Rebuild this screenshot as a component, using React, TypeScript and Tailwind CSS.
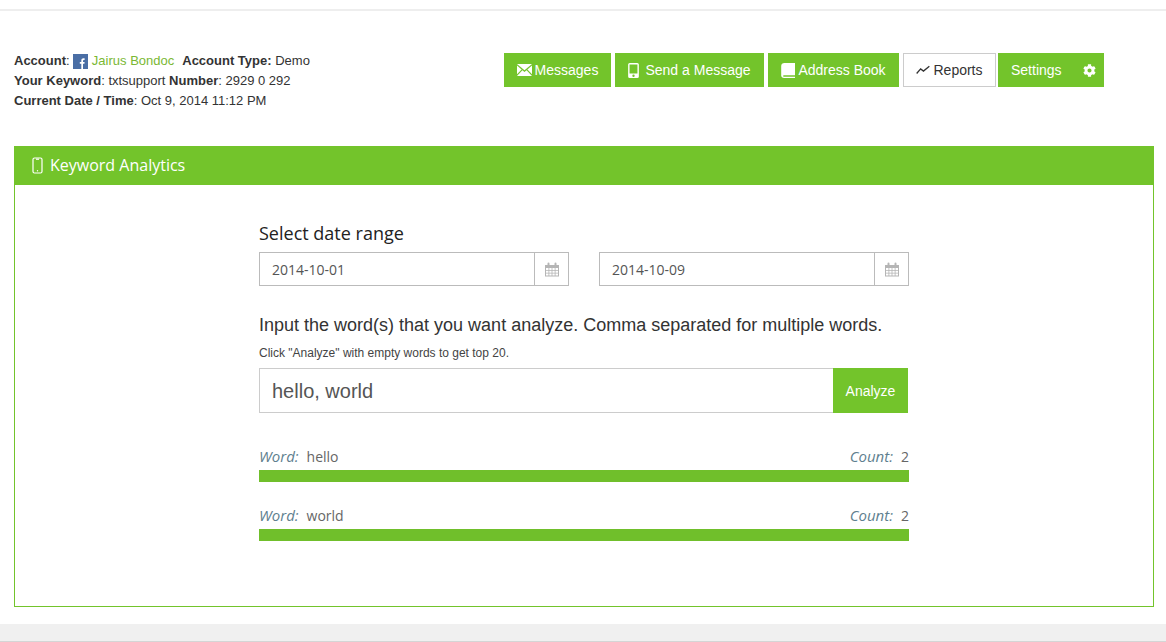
import React from 'react';
import { FaCog } from 'react-icons/fa';

const arial = "font-['Liberation_Sans',Arial,sans-serif]";
const open = "font-['Open_Sans',sans-serif]";

const MailIcon = () => (
  <svg width="15" height="12" viewBox="0 0 15 12" fill="currentColor">
    <path d="M0 0h15L7.500 6.200z" />
    <path d="M0 1.600v8.600L4.600 5.400z" />
    <path d="M15 1.600v8.600L10.400 5.400z" />
    <path d="M5.400 6.200l2.100 1.700 2.100-1.700L15 12H0z" />
  </svg>
);

const PhoneIcon = () => (
  <svg width="11" height="15" viewBox="0 0 10 14" fill="currentColor">
    <path fillRule="evenodd" d="M1.500 0h7A1.500 1.500 0 0 1 10 1.500v11A1.500 1.500 0 0 1 8.500 14h-7A1.500 1.500 0 0 1 0 12.500v-11A1.500 1.500 0 0 1 1.500 0zM1.300 1.500v8.400h7.400V1.500zM5 10.800a1.100 1.100 0 1 0 0 2.200 1.100 1.100 0 0 0 0-2.200z" />
  </svg>
);

const PhoneOutlineIcon = () => (
  <svg width="11" height="17" viewBox="0 0 11 17" fill="none" stroke="currentColor" strokeWidth="1.200">
    <rect x="1" y="1" width="9" height="15" rx="1.500" />
    <path d="M4 2.200h3" />
    <circle cx="5.500" cy="13.800" r=".7" fill="currentColor" stroke="none" />
  </svg>
);

const BookIcon = () => (
  <svg width="14" height="15" viewBox="0 0 14 15" fill="currentColor">
    <path d="M3.400 0H14v12.200H3.500c-.9 0-1.500.3-1.500.8s.6.800 1.500.800H14V15H3.200C1.400 15 .2 14 .2 12.800V3C.2 1.200 1.400 0 3.400 0z" />
  </svg>
);

const TrendIcon = () => (
  <svg width="14" height="10" viewBox="0 0 15 10" fill="none" stroke="currentColor" strokeWidth="1.400">
    <path d="M.7 8.700 5 3.800l3 2.400L14.300 1" />
  </svg>
);

const CalendarIcon = () => (
  <svg width="14" height="15" viewBox="0 0 14 14" fill="#b5b5b5">
    <path fillRule="evenodd" d="M0 2.500h2.500V1a1 1 0 0 1 2 0v1.500h5V1a1 1 0 0 1 2 0v1.500H14V14H0zM1 5.500v2h2.500v-2zm3.300 0v2h2.300v-2zm3.100 0v2h2.300v-2zm3.100 0v2H13v-2zM1 8.300v2h2.500v-2zm3.300 0v2h2.300v-2zm3.100 0v2h2.300v-2zm3.100 0v2H13v-2zM1 11.100V13h2.500v-1.900zm3.300 0V13h2.300v-1.900zm3.100 0V13h2.300v-1.900zm3.100 0V13H13v-1.900z" />
  </svg>
);

const FacebookIcon = () => (
  <svg width="15" height="15" viewBox="0 0 15 15" className="inline-block align-[-4px]">
    <rect width="15" height="15" fill="#4a6ea5" />
    <path fill="#fff" d="M8.300 15V9.800H6.800V7.900h1.500V6.600c0-1.500.9-2.300 2.200-2.300h1.100v1.800h-.8c-.6 0-.8.300-.8.800v1h1.600l-.2 1.900h-1.400V15z" />
  </svg>
);

const NavButton = ({ width, icon, label, active }: { width: string; icon: React.ReactNode; label: string; active?: boolean }) => (
  <div
    className={`${width} h-[34px] flex items-center justify-center gap-[3px] text-sm ${
      active ? 'bg-white border border-[#ccc] text-[#333]' : 'bg-[#73c42b] text-white'
    }`}
  >
    {icon}
    <span>{label}</span>
  </div>
);

const DateInput = ({ value }: { value: string }) => (
  <div className="w-[310px] h-[34px] flex border border-[#bbb]">
    <div className={`flex-1 pl-3 pt-[1px] flex items-center text-sm text-[#555] ${open}`}>{value}</div>
    <div className="w-[34px] border-l border-[#bbb] flex items-center justify-center">
      <CalendarIcon />
    </div>
  </div>
);

const WordBar = ({ word, count }: { word: string; count: number }) => (
  <div className={`h-[59px] ${open} text-[15px] text-[#666]`}>
    <div className="flex justify-between h-[26px] items-center pb-[1px]">
      <span>
        <i className="text-[#5f7f8f] mr-2">Word:</i>
        <span className="text-[14px]">{word}</span>
      </span>
      <span>
        <i className="text-[#5f7f8f] mr-2">Count:</i>
        <span className="text-[14px]">{count}</span>
      </span>
    </div>
    <div className="h-3 bg-[#70bf2b]" />
  </div>
);

export default function App() {
  return (
    <div className={`w-[1166px] h-[642px] bg-white overflow-hidden flex flex-col ${arial}`}>
      <div className="h-[11px] border-b-2 border-[#eee]" />

      {/* account info + nav */}
      <div className="h-[135px] pl-[14px] pt-[39px] flex">
        <div className="w-[490px] pt-[0.5px] text-[13px] leading-5 text-[#333]">
          <div>
            <b>Account</b>: <FacebookIcon /> <span className="text-[#7ab833]">Jairus Bondoc</span>
            <b className="ml-2">Account Type:</b> Demo
          </div>
          <div>
            <b>Your Keyword</b>: txtsupport <b>Number</b>: 2929 0 292
          </div>
          <div>
            <b>Current Date / Time</b>: Oct 9, 2014 11:12 PM
          </div>
        </div>
        <div className="flex flex-col pt-[3px]">
          <div className="flex">
            <NavButton width="w-[107px]" icon={<MailIcon />} label="Messages" />
            <div className="w-1" />
            <NavButton width="w-[149px]" icon={<span className="mr-[3px] flex"><PhoneIcon /></span>} label="Send a Message" />
            <div className="w-1" />
            <NavButton width="w-[131px]" icon={<BookIcon />} label="Address Book" />
            <div className="w-1" />
            <NavButton width="w-[93px]" icon={<TrendIcon />} label="Reports" active />
            <div className="w-0.5" />
            <div className="w-[106px] h-[34px] bg-[#73c42b] text-white text-sm flex items-center justify-between pl-[13px] pr-[8px]">
              <span>Settings</span>
              <FaCog className="text-[13px]" />
            </div>
          </div>
        </div>
      </div>

      {/* panel */}
      <div className="mx-[14px] w-[1140px] h-[461px] border border-[#73c42b] flex flex-col">
        <div className={`h-[39px] pb-[1px] shrink-0 -mx-px -mt-px bg-[#73c42b] text-white text-base flex items-center pl-[18px] gap-[7px] ${open}`}>
          <span className="flex"><PhoneOutlineIcon /></span>
          <span>Keyword Analytics</span>
        </div>
        <div className="w-[650px] ml-[244px] pt-[35px]">
          <div className={`text-lg leading-[26px] text-[#222] ${open}`}>Select date range</div>
          <div className="flex justify-between mt-[6px]">
            <DateInput value="2014-10-01" />
            <DateInput value="2014-10-09" />
          </div>
          <div className="mt-[28px] text-lg leading-[22px] text-[#333]">
            Input the word(s) that you want analyze. Comma separated for multiple words.
          </div>
          <div className="mt-[10px] text-xs leading-[14px] text-[#444]">Click "Analyze" with empty words to get top 20.</div>
          <div className="flex mt-2 w-[649px]">
            <div className="w-[574px] h-[45px] border border-[#ccc] border-r-0 flex items-center pl-3 text-xl text-[#555]">hello, world</div>
            <div className="w-[75px] h-[45px] bg-[#73c42b] text-white text-sm flex items-center justify-center">Analyze</div>
          </div>
          <div className="mt-[31px]">
            <WordBar word="hello" count={2} />
            <WordBar word="world" count={2} />
          </div>
        </div>
      </div>

      <div className="mt-[17px] h-[18px] bg-[#f0f0f0] border-b border-[#d5d5d5]" />
    </div>
  );
}
